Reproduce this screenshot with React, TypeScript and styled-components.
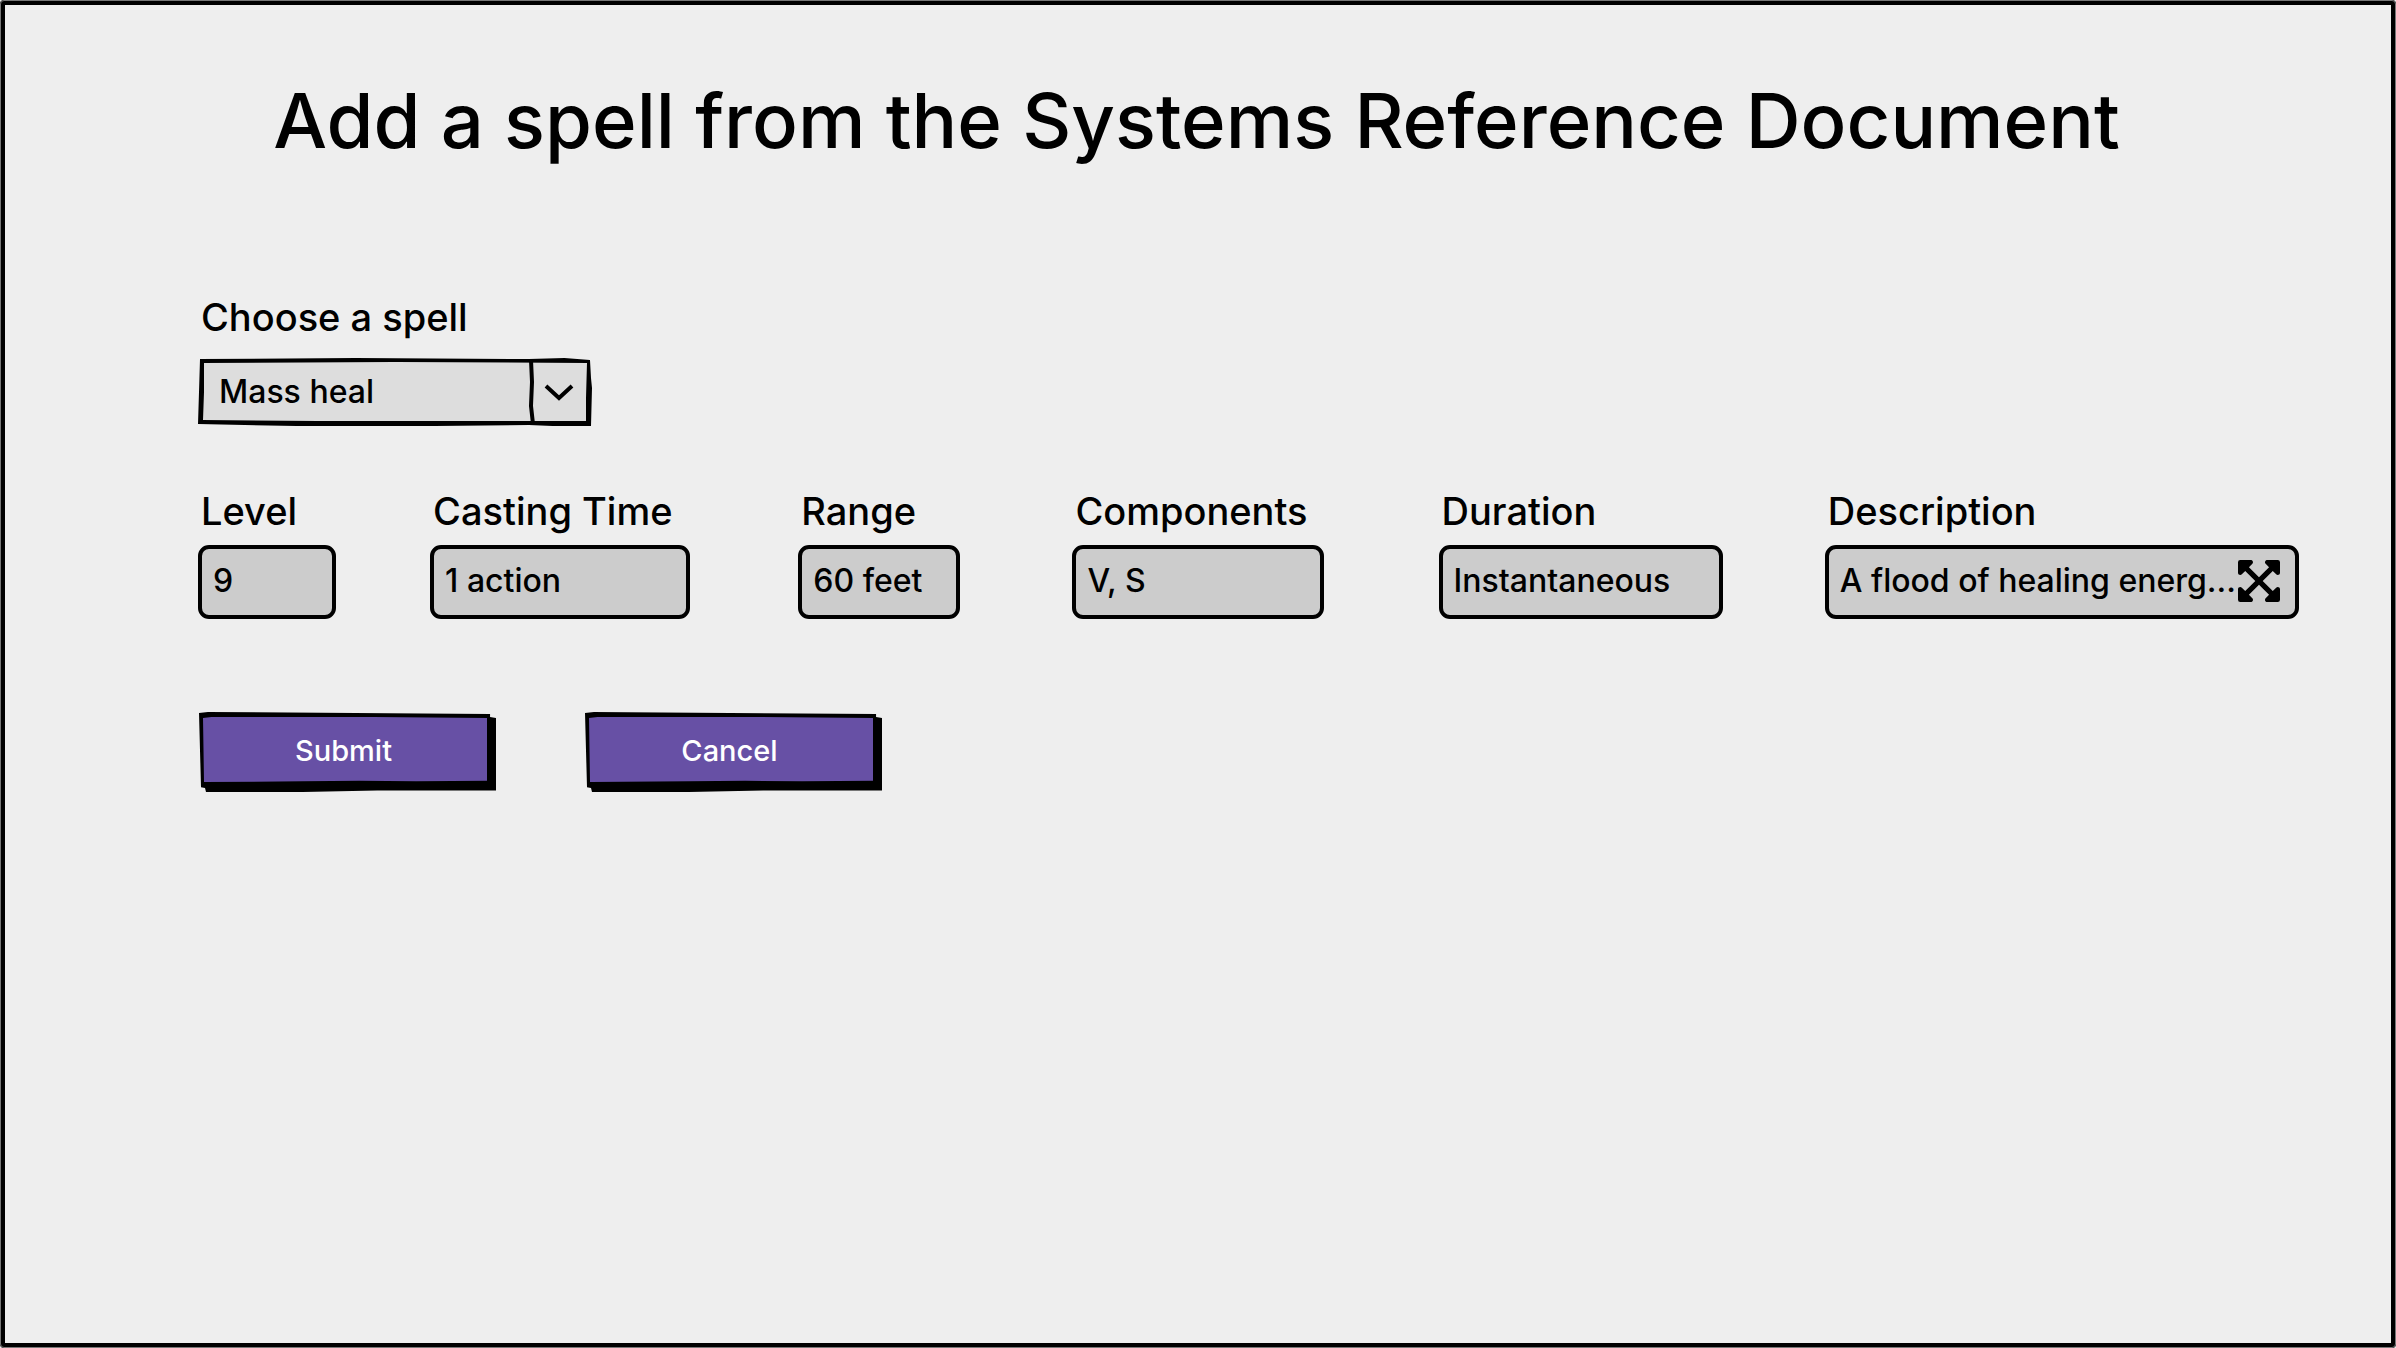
import { useState } from "react";
import styled, { createGlobalStyle } from "styled-components";
import { FaExpandArrowsAlt } from "react-icons/fa";

const ink = "#000000";
const paper = "#eeeeee";

const GlobalStyle = createGlobalStyle`
  *, *::before, *::after { box-sizing: border-box; }
  body {
    margin: 0;
    background: ${paper};
    color: ${ink};
    font-family: Inter, "Open Sans", sans-serif;
    font-weight: 500;
  }
`;

const Page = styled.main`
  min-height: 100vh;
  padding: 75px 92px 76px 193px;
  border: 5px solid ${ink};
  border-radius: 4px;
  outline: 1px solid #777777;
  outline-offset: -1px;
`;

const Title = styled.h1`
  margin: 0 104px 0 0;
  font-size: 76px;
  line-height: 80px;
  font-weight: 500;
  text-align: center;
  white-space: nowrap;
`;

const Form = styled.form`
  margin-top: 133px;
`;

const Label = styled.label`
  display: block;
  padding-left: 3px;
  font-size: 38px;
  line-height: 48px;
  white-space: nowrap;
`;

/* Two overlapping uneven polygons give the box its hand-inked outline. */
const Picker = styled.div`
  position: relative;
  isolation: isolate;
  width: 394px;
  height: 68px;
  margin: 17px 0 61px;

  &::before,
  &::after {
    content: "";
    position: absolute;
    z-index: -1;
  }
  &::before {
    inset: 0;
    background: ${ink};
    clip-path: polygon(2px 1px, 40% 0, 84% 1px, 93% 0, calc(100% - 2px) 2px, calc(100% - 1px) 20px, 100% 30px, calc(100% - 1px) 100%, 90% 100%, 84% calc(100% - 1px), 60% 100%, 25% 100%, 0 calc(100% - 2px), 1px 50%);
  }
  &::after {
    inset: 4px 5px;
    background: #dddddd;
    clip-path: polygon(1px 1px, 50% 0, 100% 1px, calc(100% - 1px) 60%, calc(100% - 1px) calc(100% - 1px), 70% calc(100% - 1px), 30% calc(100% - 1px), 0 calc(100% - 2px), 1px 50%);
  }
`;

const Select = styled.select`
  width: 100%;
  height: 100%;
  padding: 0 72px 2px 21px;
  border: 0;
  background: transparent;
  appearance: none;
  color: inherit;
  font: inherit;
  font-size: 32px;
`;

const PickerArrow = styled.svg`
  position: absolute;
  top: 0;
  right: 0;
  width: 64px;
  height: 100%;
  fill: none;
  stroke: ${ink};
  stroke-width: 4;
  pointer-events: none;
`;

const Fields = styled.div`
  display: grid;
  grid-template-columns: 232fr 368fr 274fr 366fr 386fr 474fr;
`;

const Field = styled.div`
  display: flex;
  flex-direction: column;
  gap: 10px;
  min-width: 0;
`;

const Box = styled.div<{ $width: number }>`
  display: flex;
  align-items: center;
  width: ${(p) => p.$width}px;
  max-width: 100%;
  height: 74px;
  padding: 0 12px 2px 11px;
  border: 4px solid ${ink};
  border-radius: 11px;
  background: #cccccc;
`;

const Input = styled.input`
  flex: 1;
  min-width: 0;
  padding: 0;
  border: 0;
  outline: 0;
  background: transparent;
  color: inherit;
  font: inherit;
  font-size: 32px;
  line-height: 44px;
`;

const ExpandButton = styled.button`
  display: flex;
  flex: none;
  padding: 0;
  border: 0;
  background: transparent;
  color: inherit;
  font-size: 48px;
`;

const Actions = styled.div`
  display: flex;
  gap: 89px;
  margin-top: 93px;
  padding-left: 1px;
`;

const Button = styled.button`
  position: relative;
  isolation: isolate;
  width: 297px;
  height: 80px;
  padding: 0 8px 4px 0;
  border: 0;
  background: transparent;
  color: #ffffff;
  font: inherit;
  font-size: 29px;

  &::before,
  &::after {
    content: "";
    position: absolute;
    z-index: -1;
  }
  &::before {
    inset: 0;
    background: ${ink};
    clip-path: polygon(0 1px, 3% 0, 98% 2px, 98% 5px, 100% 6px, 100% 98%, 60% 98%, 35% 100%, 7px 100%, 6px 95%, 2px 94%);
  }
  &::after {
    inset: 5px 9px 10px 4px;
    background: #6750a5;
    clip-path: polygon(0 1px, 3% 0, 60% 0, 100% 1px, 100% 98%, 75% 99%, 55% 98%, 35% 99%, 1px 100%);
  }
`;

const fields = [
  { id: "level", label: "Level", value: "9", width: 138 },
  { id: "casting-time", label: "Casting Time", value: "1 action", width: 260 },
  { id: "range", label: "Range", value: "60 feet", width: 162 },
  { id: "components", label: "Components", value: "V, S", width: 252 },
  { id: "duration", label: "Duration", value: "Instantaneous", width: 284 },
  { id: "description", label: "Description", value: "A flood of healing energ...", width: 474, expandable: true },
];

export default function App() {
  const [spell, setSpell] = useState("Mass heal");

  return (
    <>
      <GlobalStyle />
      <Page>
        <Title>Add a spell from the Systems Reference Document</Title>
        <Form onSubmit={(e) => e.preventDefault()}>
          <Label htmlFor="spell">Choose a spell</Label>
          <Picker>
            <Select id="spell" value={spell} onChange={(e) => setSpell(e.target.value)}>
              <option>Mass heal</option>
            </Select>
            <PickerArrow viewBox="0 0 64 68" aria-hidden="true">
              <path d="M3 2 L4 24 L3 48 L5 66" />
              <path d="M18 28 L31 40 L44 28" />
            </PickerArrow>
          </Picker>
          <Fields>
            {fields.map((f) => (
              <Field key={f.id}>
                <Label htmlFor={f.id}>{f.label}</Label>
                <Box $width={f.width}>
                  <Input id={f.id} value={f.value} readOnly />
                  {f.expandable && (
                    <ExpandButton type="button" aria-label="Expand description">
                      <FaExpandArrowsAlt />
                    </ExpandButton>
                  )}
                </Box>
              </Field>
            ))}
          </Fields>
          <Actions>
            <Button type="submit">Submit</Button>
            <Button type="button">Cancel</Button>
          </Actions>
        </Form>
      </Page>
    </>
  );
}
